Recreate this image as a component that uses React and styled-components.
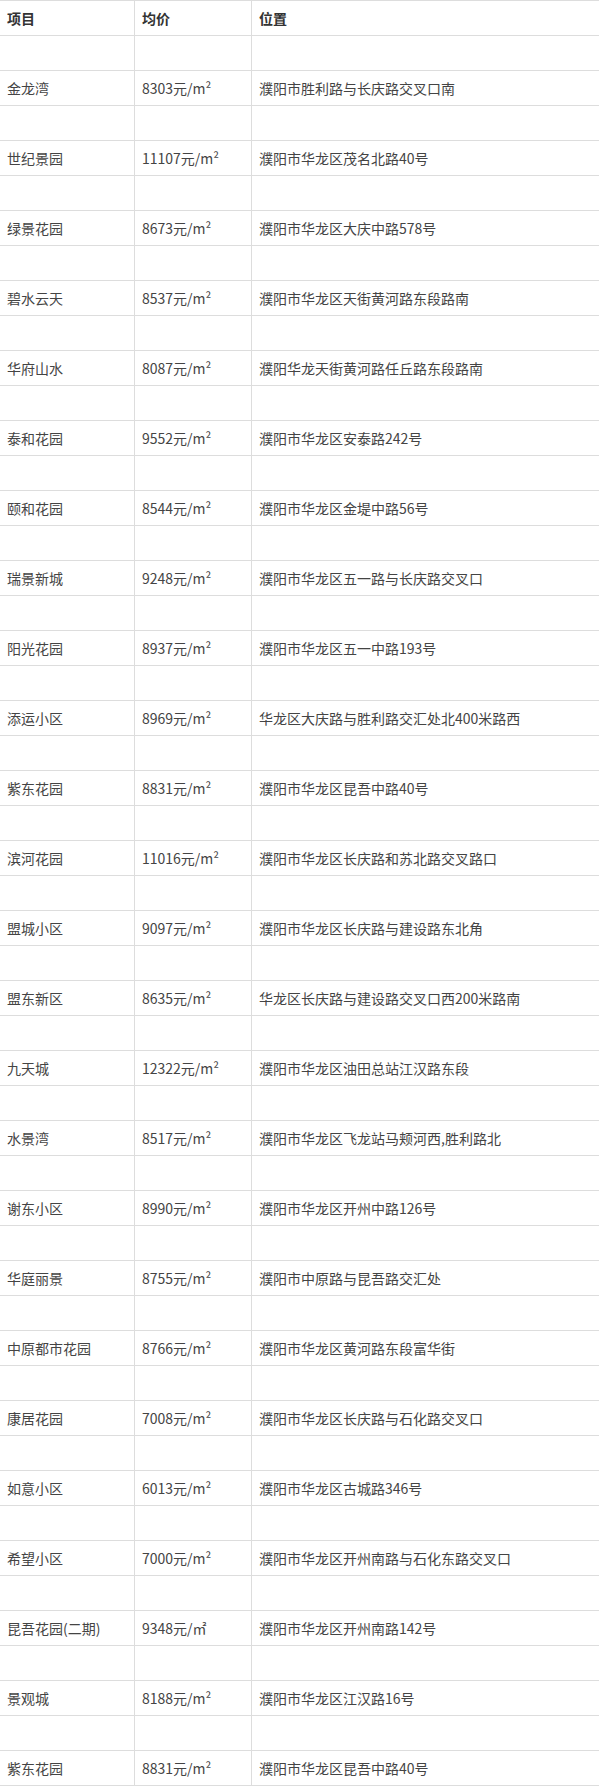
import React from "react";
import styled, { createGlobalStyle } from "styled-components";

const GlobalStyle = createGlobalStyle`
	html, body {
		margin: 0;
		padding: 0;
		background: #fff;
	}
	body {
		font-family: "Noto Sans CJK SC", "Noto Sans", sans-serif;
	}
`;

const Table = styled.div`
	display: grid;
	grid-template-columns: 135px 117px 1fr;
	border-top: 1px solid #dddddd;
	width: 100%;
`;

const Cell = styled.div`
	box-sizing: border-box;
	height: 35px;
	padding: 0 7px;
	display: flex;
	align-items: center;
	border-bottom: 1px solid #dddddd;
	border-right: ${(p) => (p.$last ? "none" : "1px solid #dddddd")};
	font-size: 14px;
	font-weight: ${(p) => (p.$head ? 700 : 400)};
	color: ${(p) => (p.$head ? "#333333" : "#444444")};
	white-space: nowrap;
	overflow: hidden;
`;

const rows = [
	["金龙湾", "8303元/m²", "濮阳市胜利路与长庆路交叉口南"],
	["世纪景园", "11107元/m²", "濮阳市华龙区茂名北路40号"],
	["绿景花园", "8673元/m²", "濮阳市华龙区大庆中路578号"],
	["碧水云天", "8537元/m²", "濮阳市华龙区天街黄河路东段路南"],
	["华府山水", "8087元/m²", "濮阳华龙天街黄河路任丘路东段路南"],
	["泰和花园", "9552元/m²", "濮阳市华龙区安泰路242号"],
	["颐和花园", "8544元/m²", "濮阳市华龙区金堤中路56号"],
	["瑞景新城", "9248元/m²", "濮阳市华龙区五一路与长庆路交叉口"],
	["阳光花园", "8937元/m²", "濮阳市华龙区五一中路193号"],
	["添运小区", "8969元/m²", "华龙区大庆路与胜利路交汇处北400米路西"],
	["紫东花园", "8831元/m²", "濮阳市华龙区昆吾中路40号"],
	["滨河花园", "11016元/m²", "濮阳市华龙区长庆路和苏北路交叉路口"],
	["盟城小区", "9097元/m²", "濮阳市华龙区长庆路与建设路东北角"],
	["盟东新区", "8635元/m²", "华龙区长庆路与建设路交叉口西200米路南"],
	["九天城", "12322元/m²", "濮阳市华龙区油田总站江汉路东段"],
	["水景湾", "8517元/m²", "濮阳市华龙区飞龙站马颊河西,胜利路北"],
	["谢东小区", "8990元/m²", "濮阳市华龙区开州中路126号"],
	["华庭丽景", "8755元/m²", "濮阳市中原路与昆吾路交汇处"],
	["中原都市花园", "8766元/m²", "濮阳市华龙区黄河路东段富华街"],
	["康居花园", "7008元/m²", "濮阳市华龙区长庆路与石化路交叉口"],
	["如意小区", "6013元/m²", "濮阳市华龙区古城路346号"],
	["希望小区", "7000元/m²", "濮阳市华龙区开州南路与石化东路交叉口"],
	["昆吾花园(二期)", "9348元/㎡", "濮阳市华龙区开州南路142号"],
	["景观城", "8188元/m²", "濮阳市华龙区江汉路16号"],
	["紫东花园", "8831元/m²", "濮阳市华龙区昆吾中路40号"],
];

function Row({ cells, head }) {
	return (
		<>
			{cells.map((c, i) => (
				<Cell key={i} $head={head} $last={i === cells.length - 1}>
					{c}
				</Cell>
			))}
		</>
	);
}

export default function App() {
	return (
		<>
			<GlobalStyle />
			<Table>
				<Row head cells={["项目", "均价", "位置"]} />
				{rows.map((r, i) => (
					<React.Fragment key={i}>
						<Row cells={["", "", ""]} />
						<Row cells={r} />
					</React.Fragment>
				))}
			</Table>
		</>
	);
}
